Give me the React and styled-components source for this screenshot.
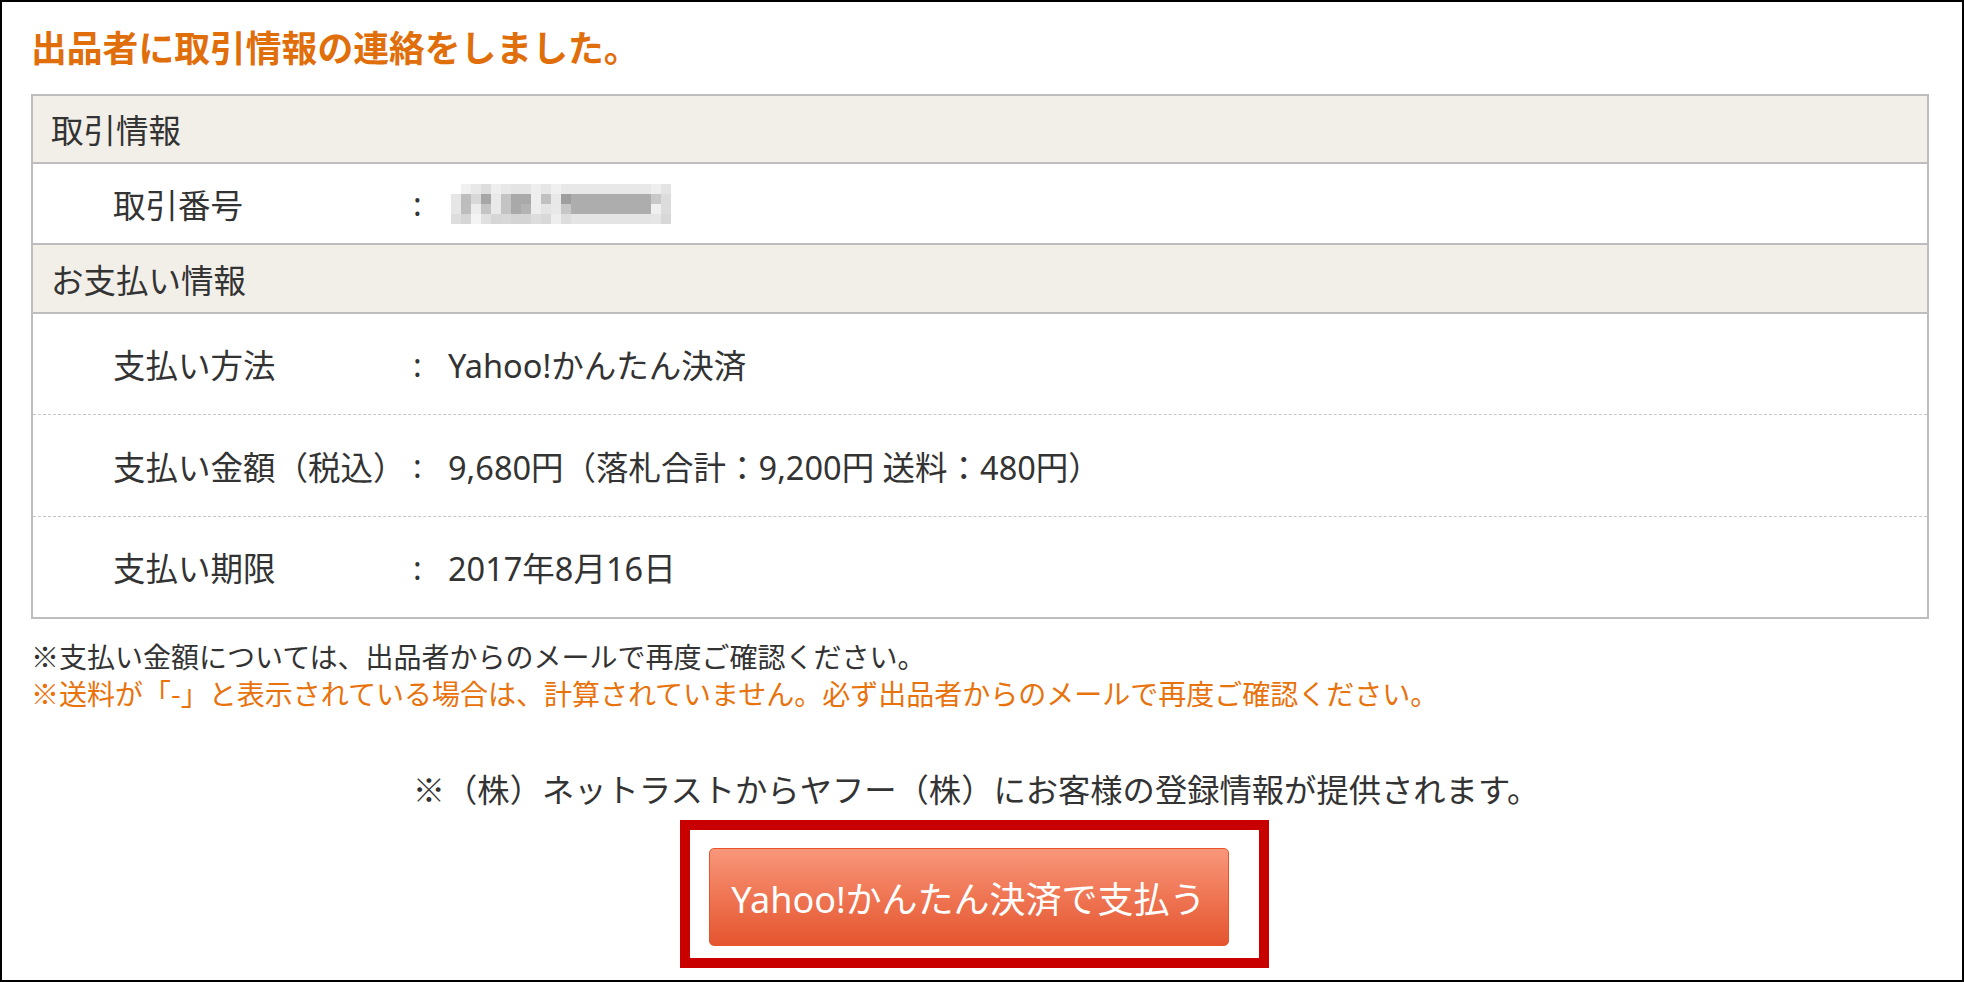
import React from "react";
import styled, { createGlobalStyle } from "styled-components";

const GlobalStyle = createGlobalStyle`
  html, body { margin: 0; padding: 0; background: #fff; }
  body {
    font-family: "Noto Sans", "Noto Sans CJK JP", sans-serif;
    color: #333;
  }
`;

const Frame = styled.div`
  box-sizing: border-box;
  width: 1964px;
  height: 982px;
  border: 2px solid #000;
  padding: 18px 33px 0 29px;
  overflow: hidden;
`;

const Title = styled.h1`
  margin: 0;
  font-family: "Noto Sans CJK JP", sans-serif;
  font-size: 35.8px;
  line-height: 52px;
  font-weight: 700;
  color: #df6e0b;
`;

const Table = styled.div`
  margin-top: 22px;
  border: 2px solid #bdbdbd;
  font-size: 32.5px;
  color: #333;
`;

const SectionHead = styled.div`
  display: flex;
  align-items: center;
  height: ${(p) => p.$h}px;
  padding-left: 18px;
  background: #f2efe9;
  border-top: ${(p) => (p.$first ? "none" : "2px solid #bdbdbd")};
  border-bottom: 2px solid #bdbdbd;
`;

const Row = styled.div`
  display: grid;
  grid-template-columns: 300px 35px 1fr;
  align-items: center;
  height: ${(p) => p.$h}px;
  padding-left: 80px;
  border-bottom: ${(p) => (p.$dashed ? "1px dashed #c6c6c6" : "none")};
`;

const Label = styled.span`
  white-space: nowrap;
`;

const Colon = styled.span`
  white-space: nowrap;
`;

const Value = styled.span`
  white-space: nowrap;
`;

const Notes = styled.div`
  margin-top: 19px;
  font-family: "Noto Sans CJK JP", sans-serif;
  font-size: 28px;
  line-height: 37px;
`;

const Note = styled.p`
  margin: 0;
  color: ${(p) => (p.$warn ? "#e8720c" : "#333")};
`;

const Footer = styled.div`
  display: flex;
  flex-direction: column;
  align-items: center;
  padding-right: 12px;
`;

const Provider = styled.p`
  margin: 54px 0 0;
  padding-left: 4px;
  text-align: center;
  font-family: "Noto Sans CJK JP", sans-serif;
  font-size: 32.3px;
  line-height: 44px;
  color: #333;
`;

const Highlight = styled.div`
  box-sizing: border-box;
  width: 589px;
  margin-top: 10px;
  border: 10px solid #c80000;
  padding: 18px 30px 12px 19px;
`;

const PayButton = styled.button`
  display: block;
  width: 520px;
  height: 98px;
  padding: 0;
  border: 1px solid #e9542d;
  border-radius: 5px;
  background: linear-gradient(to bottom, #f8977b 0%, #ef7553 50%, #e4552f 100%);
  color: #fff;
  font-family: "Noto Sans", "Noto Sans CJK JP", sans-serif;
  font-size: 36px;
  cursor: pointer;
`;

/* pixelated masking over the transaction number */
const mosaic = [
  ["#ffffff", "#e6e6e6", "#e6e6e6", "#dddddd"],
  ["#f0f0f0", "#bdbdbd", "#bdbdbd", "#d5d5d5"],
  ["#e8e8e8", "#d8d8d8", "#ececec", "#f4f4f4"],
  ["#dddddd", "#a6a6a6", "#c4c4c4", "#e0e0e0"],
  ["#eeeeee", "#e9e9e9", "#e9e9e9", "#d6d6d6"],
  ["#e8e8e8", "#c4c4c4", "#c4c4c4", "#d8d8d8"],
  ["#e4e4e4", "#a9a9a9", "#a9a9a9", "#d4d4d4"],
  ["#e4e4e4", "#a9a9a9", "#b3b3b3", "#d4d4d4"],
  ["#eeeeee", "#eeeeee", "#eeeeee", "#dddddd"],
  ["#e6e6e6", "#c0c0c0", "#e4e4e4", "#d8d8d8"],
  ["#f0f0f0", "#e8e8e8", "#e8e8e8", "#eeeeee"],
  ["#e8e8e8", "#9e9e9e", "#c6c6c6", "#dddddd"],
  ["#e8e8e8", "#adadad", "#adadad", "#e4e4e4"],
  ["#e8e8e8", "#adadad", "#adadad", "#e4e4e4"],
  ["#e8e8e8", "#adadad", "#adadad", "#e4e4e4"],
  ["#e8e8e8", "#adadad", "#adadad", "#e4e4e4"],
  ["#e8e8e8", "#adadad", "#adadad", "#e4e4e4"],
  ["#e8e8e8", "#adadad", "#adadad", "#e4e4e4"],
  ["#e8e8e8", "#adadad", "#adadad", "#e4e4e4"],
  ["#e8e8e8", "#adadad", "#adadad", "#e4e4e4"],
  ["#eeeeee", "#c8c8c8", "#f0f0f0", "#e6e6e6"],
  ["#e4e4e4", "#dcdcdc", "#dcdcdc", "#d8d8d8"],
];

const Masked = () => (
  <svg width="222" height="40" viewBox="0 0 220 40" shapeRendering="crispEdges" style={{ display: "block", marginLeft: 2 }}>
    {mosaic.map((col, i) =>
      col.map((c, j) => <rect key={`${i}-${j}`} x={i * 10} y={j * 10} width="10" height="10" fill={c} />)
    )}
  </svg>
);

export default function App() {
  return (
    <>
      <GlobalStyle />
      <Frame>
        <Title>出品者に取引情報の連絡をしました。</Title>
        <Table>
          <SectionHead $first $h={66}>取引情報</SectionHead>
          <Row $h={79}>
            <Label>取引番号</Label>
            <Colon>:</Colon>
            <Value>
              <Masked />
            </Value>
          </Row>
          <SectionHead $h={67}>お支払い情報</SectionHead>
          <Row $h={100} $dashed>
            <Label>支払い方法</Label>
            <Colon>:</Colon>
            <Value>Yahoo!かんたん決済</Value>
          </Row>
          <Row $h={101} $dashed>
            <Label>支払い金額（税込）</Label>
            <Colon>:</Colon>
            <Value>9,680円（落札合計：9,200円 送料：480円）</Value>
          </Row>
          <Row $h={100}>
            <Label>支払い期限</Label>
            <Colon>:</Colon>
            <Value>2017年8月16日</Value>
          </Row>
        </Table>
        <Notes>
          <Note>※支払い金額については、出品者からのメールで再度ご確認ください。</Note>
          <Note $warn>※送料が「-」と表示されている場合は、計算されていません。必ず出品者からのメールで再度ご確認ください。</Note>
        </Notes>
        <Footer>
          <Provider>※（株）ネットラストからヤフー（株）にお客様の登録情報が提供されます。</Provider>
          <Highlight>
            <PayButton type="button">Yahoo!かんたん決済で支払う</PayButton>
          </Highlight>
        </Footer>
      </Frame>
    </>
  );
}
